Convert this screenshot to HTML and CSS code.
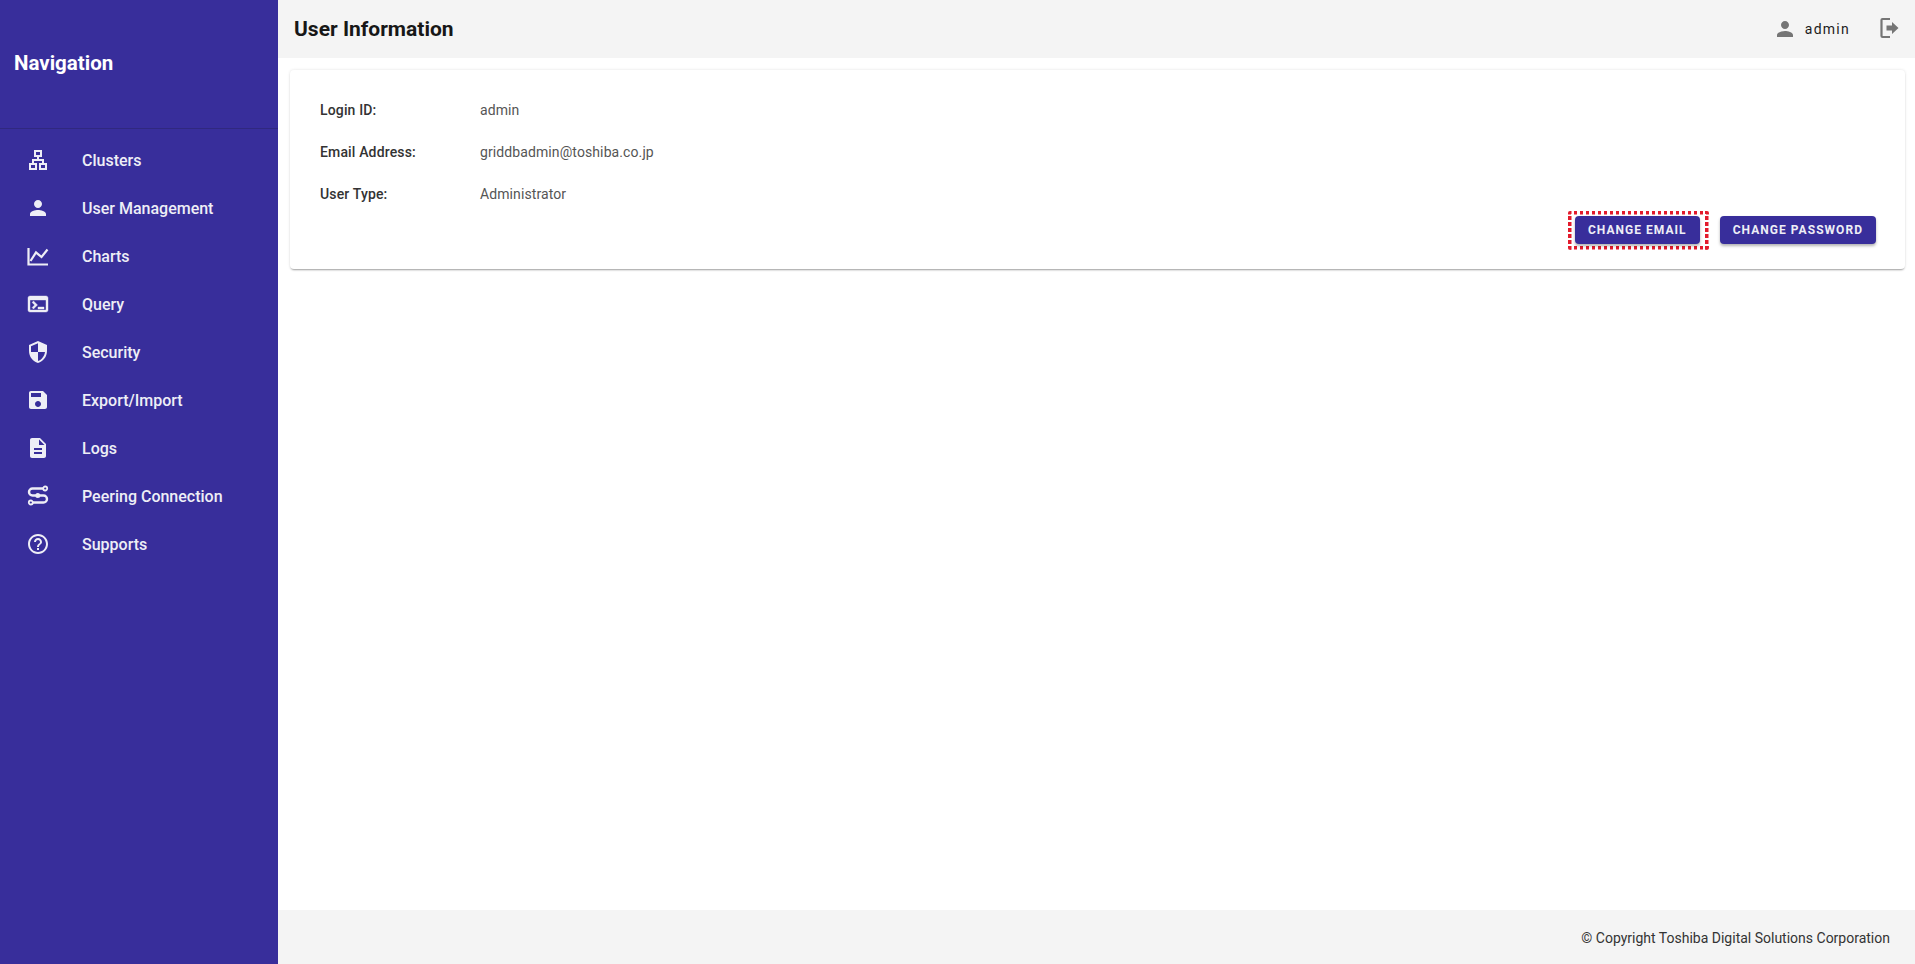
FILE: index.html
```html
<!DOCTYPE html>
<html lang="en">
<head>
    <meta charset="UTF-8">
    <meta name="viewport" content="width=device-width, initial-scale=1.0">
    <title>User Information</title>
    <link rel="stylesheet" href="styles.css">
</head>
<body>
    <div class="layout">
        <aside class="sidebar">
            <div class="sidebar-title">Navigation</div>
            <nav class="nav-list">
                <a href="#" class="nav-item">
                    <svg class="nav-icon" viewBox="0 0 24 24"><path d="M13 22h8v-7h-3v-4h-5V9h3V2H8v7h3v2H6v4H3v7h8v-7H8v-2h8v2h-3v7zM10 7V4h4v3h-4zM5 20v-3h4v3H5zm14-3v3h-4v-3h4z"/></svg>
                    <span>Clusters</span>
                </a>
                <a href="#" class="nav-item">
                    <svg class="nav-icon" viewBox="0 0 24 24"><path d="M12 12c2.210 0 4-1.790 4-4s-1.790-4-4-4-4 1.790-4 4 1.790 4 4 4zm0 2c-2.670 0-8 1.340-8 4v2h16v-2c0-2.660-5.330-4-8-4z"/></svg>
                    <span>User Management</span>
                </a>
                <a href="#" class="nav-item">
                    <svg class="nav-icon" viewBox="0 0 24 24"><path class="line" d="M2.500 4v16.500H22"/><path class="line" d="M4.500 17l5.500-8.500 5.500 4.500 6-7.500"/></svg>
                    <span>Charts</span>
                </a>
                <a href="#" class="nav-item">
                    <svg class="nav-icon heavy" viewBox="0 0 24 24"><path d="M20 4H4c-1.110 0-2 .9-2 2v12c0 1.100.89 2 2 2h16c1.100 0 2-.9 2-2V6c0-1.100-.89-2-2-2zm0 14H4V8h16v10zm-2-1h-6v-2h6v2zM7.500 17l-1.410-1.410L8.670 13l-2.590-2.590L7.500 9l4 4-4 4z"/></svg>
                    <span>Query</span>
                </a>
                <a href="#" class="nav-item">
                    <svg class="nav-icon" viewBox="0 0 24 24"><path d="M12 1L3 5v6c0 5.550 3.840 10.740 9 12 5.160-1.260 9-6.450 9-12V5l-9-4zm0 10.990h7c-.53 4.120-3.280 7.790-7 8.940V12H5V6.300l7-3.110v8.800z"/></svg>
                    <span>Security</span>
                </a>
                <a href="#" class="nav-item">
                    <svg class="nav-icon" viewBox="0 0 24 24"><path d="M17 3H5c-1.110 0-2 .9-2 2v14c0 1.100.89 2 2 2h14c1.100 0 2-.9 2-2V7l-4-4zm-5 16c-1.660 0-3-1.340-3-3s1.340-3 3-3 3 1.340 3 3-1.340 3-3 3zm3-10H5V5h10v4z"/></svg>
                    <span>Export/Import</span>
                </a>
                <a href="#" class="nav-item">
                    <svg class="nav-icon" viewBox="0 0 24 24"><path d="M14 2H6c-1.100 0-1.990.9-1.990 2L4 20c0 1.100.89 2 1.990 2H18c1.100 0 2-.9 2-2V8l-6-6zm2 16H8v-2h8v2zm0-4H8v-2h8v2zm-3-5V3.500L18.500 9H13z"/></svg>
                    <span>Logs</span>
                </a>
                <a href="#" class="nav-item">
                    <svg class="nav-icon" viewBox="0 0 24 24"><path class="line wide" d="M17 4.500H6.500a3.500 3.500 0 0 0 0 7h11a3.500 3.500 0 0 1 0 7H7"/><circle class="ring" cx="19.200" cy="4.500" r="2"/><circle class="ring" cx="4.800" cy="18.500" r="2"/><circle cx="11.800" cy="11.500" r="2.500"/></svg>
                    <span>Peering Connection</span>
                </a>
                <a href="#" class="nav-item">
                    <svg class="nav-icon" viewBox="0 0 24 24"><path d="M11 18h2v-2h-2v2zm1-16C6.480 2 2 6.480 2 12s4.480 10 10 10 10-4.480 10-10S17.520 2 12 2zm0 18c-4.410 0-8-3.590-8-8s3.590-8 8-8 8 3.590 8 8-3.590 8-8 8zm0-14c-2.210 0-4 1.790-4 4h2c0-1.100.9-2 2-2s2 .9 2 2c0 2-3 1.750-3 5h2c0-2.250 3-2.500 3-5 0-2.210-1.790-4-4-4z"/></svg>
                    <span>Supports</span>
                </a>
            </nav>
        </aside>

        <div class="main">
            <header class="topbar">
                <h1 class="page-title">User Information</h1>
                <div class="user-box">
                    <svg class="user-icon" viewBox="0 0 24 24"><path d="M12 12c2.210 0 4-1.790 4-4s-1.790-4-4-4-4 1.790-4 4 1.790 4 4 4zm0 2c-2.670 0-8 1.340-8 4v2h16v-2c0-2.660-5.330-4-8-4z"/></svg>
                    <span class="user-name">admin</span>
                    <svg class="logout-icon" viewBox="0 0 24 24"><path class="line" d="M13 3H5.500a1 1 0 0 0-1 1v16a1 1 0 0 0 1 1H13"/><path d="M9.500 9.500H15V6l6.500 6-6.500 6v-3.500H9.500z"/></svg>
                </div>
            </header>

            <div class="content">
                <section class="card">
                    <div class="info-row">
                        <div class="info-label">Login ID:</div>
                        <div class="info-value">admin</div>
                    </div>
                    <div class="info-row">
                        <div class="info-label">Email Address:</div>
                        <div class="info-value">griddbadmin@toshiba.co.jp</div>
                    </div>
                    <div class="info-row">
                        <div class="info-label">User Type:</div>
                        <div class="info-value">Administrator</div>
                    </div>
                    <div class="card-actions">
                        <div class="highlight">
                            <button class="action-button">CHANGE EMAIL</button>
                        </div>
                        <button class="action-button">CHANGE PASSWORD</button>
                    </div>
                </section>
            </div>

            <footer class="footer">© Copyright Toshiba Digital Solutions Corporation</footer>
        </div>
    </div>
</body>
</html>
```

FILE: styles.css
```css
:root {
    --primary: #382e9b;
    --gray-bg: #f4f4f4;
    --nav-text: #eeeef6;
    --gray-icon: #757575;
}

* {
    margin: 0;
    padding: 0;
    box-sizing: border-box;
    font-family: 'Roboto', sans-serif;
}

body {
    background: white;
    color: #212121;
    overflow: hidden;
}

.layout {
    display: flex;
    height: 100vh;
}

.sidebar {
    width: 278px;
    flex-shrink: 0;
    background: var(--primary);
}

.sidebar-title {
    height: 129px;
    padding: 51px 14px 0;
    font-size: 20.500px;
    line-height: 24px;
    font-weight: 700;
    color: white;
    border-bottom: 1px solid #30287f;
}

.nav-list {
    padding-top: 7px;
}

.nav-item {
    display: flex;
    align-items: center;
    height: 48px;
    padding-left: 26px;
    color: var(--nav-text);
    text-decoration: none;
    font-size: 16px;
    font-weight: 500;
}

.nav-icon {
    width: 24px;
    height: 24px;
    margin-right: 32px;
    fill: var(--nav-text);
}

.heavy {
    stroke: var(--nav-text);
    stroke-width: 0.4;
}

.line {
    fill: none;
    stroke: currentColor;
    stroke-width: 2.200;
}

.line.wide {
    stroke-width: 2.400;
}

.ring {
    fill: none;
    stroke: currentColor;
    stroke-width: 1.800;
}

.main {
    flex: 1;
    min-width: 0;
    display: flex;
    flex-direction: column;
}

.topbar {
    height: 58px;
    padding: 0 14px 0 16px;
    background: var(--gray-bg);
    display: flex;
    justify-content: space-between;
    align-items: center;
}

.page-title {
    font-size: 21px;
    font-weight: 700;
    color: #171717;
}

.user-box {
    display: flex;
    align-items: center;
    color: var(--gray-icon);
}

.user-icon {
    width: 24px;
    height: 24px;
    fill: var(--gray-icon);
    margin-right: 8px;
}

.user-name {
    font-size: 14px;
    letter-spacing: 1.250px;
    color: #1c1c1c;
    margin-right: 27px;
}

.logout-icon {
    width: 24px;
    height: 24px;
    margin-bottom: 2px;
    fill: var(--gray-icon);
}

.content {
    flex: 1;
    padding: 12px 10px 0 12px;
}

.card {
    height: 199px;
    padding: 19px 29px 0 30px;
    background: white;
    border-radius: 4px;
    box-shadow: 0 2px 2px -1px rgba(0, 0, 0, 0.35), 0 0 3px rgba(0, 0, 0, 0.12);
}

.info-row {
    display: flex;
    align-items: center;
    height: 42px;
    font-size: 14px;
}

.info-label {
    width: 160px;
    font-weight: 500;
    letter-spacing: 0.150px;
    color: #333;
}

.info-value {
    letter-spacing: 0.100px;
    color: #555;
}

.card-actions {
    display: flex;
    justify-content: flex-end;
    align-items: flex-start;
    margin-top: 1px;
    gap: 11px;
}

/* red dotted marker round the first button */
.highlight {
    padding: 5px 9px 5.500px 7px;
    margin-top: -5px;
    border-radius: 2px;
    background:
        repeating-linear-gradient(90deg, #e31b2c 0 3.500px, transparent 3.500px 6px) top / 100% 3.500px no-repeat,
        repeating-linear-gradient(90deg, #e31b2c 0 3.500px, transparent 3.500px 6px) bottom / 100% 3.500px no-repeat,
        repeating-linear-gradient(0deg, #e31b2c 0 3.500px, transparent 3.500px 6px) left / 3.500px 100% no-repeat,
        repeating-linear-gradient(0deg, #e31b2c 0 3.500px, transparent 3.500px 6px) right / 3.500px 100% no-repeat;
}

.action-button {
    display: block;
    height: 28px;
    padding: 0 13px;
    background: var(--primary);
    color: #eeeef6;
    border: none;
    border-radius: 4px;
    font-size: 12px;
    font-weight: 700;
    letter-spacing: 1.040px;
    box-shadow: 0 2px 3px rgba(0, 0, 0, 0.3);
    cursor: pointer;
}

.footer {
    height: 54px;
    padding: 2px 25px 0 0;
    background: var(--gray-bg);
    display: flex;
    justify-content: flex-end;
    align-items: center;
    font-size: 14px;
    color: #333;
}
```
